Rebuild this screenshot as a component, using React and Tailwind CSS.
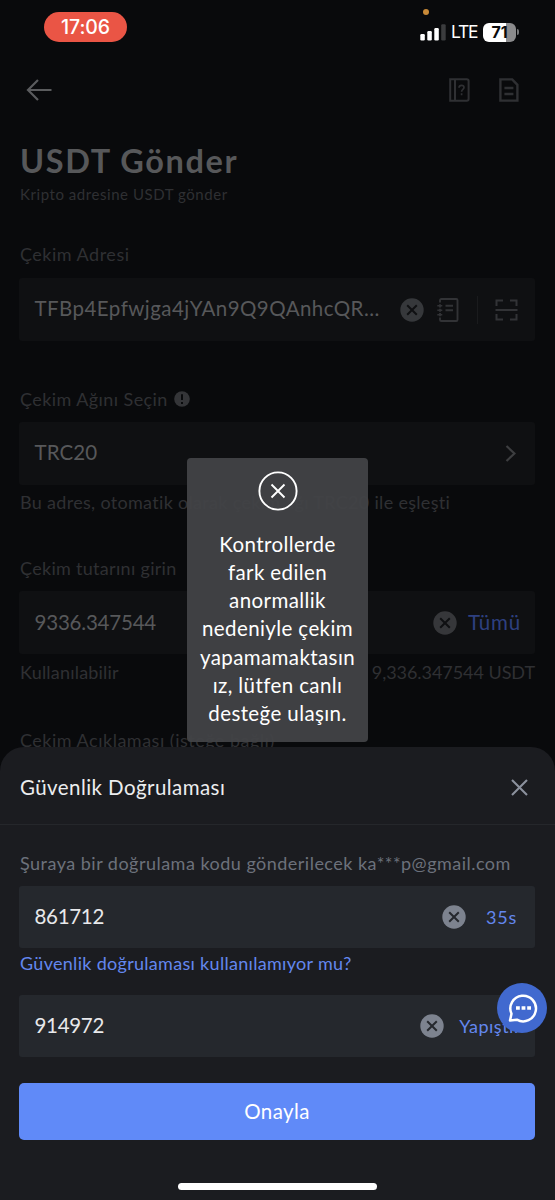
function ArrowLeft() {
  return (
    <svg width="26" height="22" viewBox="0 0 26 22" fill="none" stroke="#5b5c5e" strokeWidth="2.2">
      <path d="M12 1 2 11l10 10M2 11h23.5" />
    </svg>
  );
}

function GuideIcon() {
  return (
    <svg width="21" height="24" viewBox="0 0 21 24" fill="none" stroke="#2f3033" strokeWidth="2">
      <path d="M1.2 1.2h16.6a1.8 1.8 0 0 1 1.8 1.8v18a1.8 1.8 0 0 1-1.8 1.8H1.2zM6 1v22" />
      <path d="M10 9.7c.1-1.6 1.2-2.4 2.5-2.4s2.5.8 2.5 2.2c0 1.9-2.4 2-2.4 4.2M12.6 15.2v2" strokeWidth="1.7" />
    </svg>
  );
}

function DocIcon() {
  return (
    <svg width="20" height="24" viewBox="0 0 20 24" fill="none" stroke="#2f3033" strokeWidth="2.4">
      <path d="M1.4 1.4h11.8l5.2 5.4v15.8h-17zM5.4 10h9M5.4 16h9" />
    </svg>
  );
}

function ClearIcon({ circle, cross }) {
  return (
    <svg width="24" height="24" viewBox="0 0 24 24" className="shrink-0">
      <circle cx="12" cy="12" r="11.7" fill={circle} />
      <path d="m7.2 7.2 9.6 9.6m0-9.6-9.6 9.6" stroke={cross} strokeWidth="2" />
    </svg>
  );
}

function AddressBookIcon() {
  return (
    <svg width="22" height="24" viewBox="0 0 22 24" fill="none" stroke="#323336" strokeWidth="1.9" className="shrink-0">
      <path d="M3 4.500V2.300A1.300 1.300 0 0 1 4.300 1h14.900a1.300 1.300 0 0 1 1.300 1.300v19.400a1.300 1.300 0 0 1-1.300 1.300H4.300A1.300 1.300 0 0 1 3 21.700v-2.200" />
      <path d="M3 6.300v3.200M3 10.800v3M3 15.100v3.200" />
      <path d="M.3 7.800h5M.3 12.300h5M.3 16.800h5" strokeWidth="1.400" />
      <path d="M8.500 7.800h7.500M8.500 12.300h7.500" />
    </svg>
  );
}

function ScanIcon() {
  return (
    <svg width="23" height="22" viewBox="0 0 23 22" fill="none" stroke="#323336" strokeWidth="2" className="shrink-0">
      <path d="M1.500 7V1.500H8M15 1.500h6.500V7M21.500 15v5.500H15M8 20.500H1.500V15M.5 11h22" />
    </svg>
  );
}

function Box({ children, className = "" }) {
  return (
    <div className={`flex h-[63px] items-center rounded-[3px] bg-[#0f1012] pl-[15.500px] text-[20.5px] text-[#57585a] ${className}`}>
      {children}
    </div>
  );
}

function StatusBar() {
  return (
    <div className="relative flex h-[54px] items-start justify-between pl-[44px] pr-[36px] pt-3 font-['Inter',sans-serif]">
      <div className="flex h-[30px] w-[83px] items-center justify-center rounded-full bg-[#ea5545] pt-px text-[19.5px] leading-none font-medium tracking-[-0.1px] text-white">
        17:06
      </div>
      <span className="absolute left-[423px] top-[9px] size-[6px] rounded-full bg-[#c98a38]" />
      <div className="flex h-[19px] items-center pt-[20px]">
        <svg width="26" height="17" viewBox="0 0 26 17" fill="#fff">
          <rect x="0.300" y="10" width="4.500" height="6.500" rx="1.200" />
          <rect x="7.300" y="7" width="4.500" height="9.500" rx="1.200" />
          <rect x="14.300" y="4" width="4.500" height="12.500" rx="1.200" />
          <rect x="21.200" y="0.300" width="4.500" height="16.200" rx="1.200" fill="#3b3c3e" />
        </svg>
        <span className="ml-[5.500px] w-[27px] text-[17.500px] leading-none tracking-[-1.300px] text-white">LTE</span>
        <div className="ml-[5px] flex h-[19px] w-[33px] items-center justify-center rounded-[6px] bg-[linear-gradient(90deg,#fff_70%,#8b8b8d_70%)] text-[16px] leading-none font-bold text-[#090a0c]">
          71
        </div>
        <span className="ml-[1px] h-[6px] w-[2px] rounded-r-full bg-[#77787a]" />
      </div>
    </div>
  );
}

function SendForm() {
  return (
    <main className="flex flex-col pl-[19px] pr-[20px] text-[18px] text-[#2f3033]">
      <nav className="flex h-[72px] items-center justify-between pb-px pl-[7px] pr-[16px]">
        <ArrowLeft />
        <div className="flex items-center gap-[29px]">
          <GuideIcon />
          <DocIcon />
        </div>
      </nav>
      <h1 className="mt-[15px] flex h-10 items-center pl-px text-[32.500px] font-bold tracking-[1.600px] text-[#57585a]">USDT Gönder</h1>
      <p className="mt-[3px] flex h-5 items-center pl-px text-[15px] tracking-[0.550px]">Kripto adresine USDT gönder</p>

      <div className="mt-[40px] flex h-5 items-center pl-px tracking-[0.500px]">Çekim Adresi</div>
      <Box className="mt-[14px] pr-[17px]">
        <span className="-mt-[2px] w-[366px] tracking-[0.450px]">TFBp4Epfwjga4jYAn9Q9QAnhcQR...</span>
        <ClearIcon circle="#36383b" cross="#0f1012" />
        <span className="ml-[13px] flex"><AddressBookIcon /></span>
        <span className="ml-[18px] mr-[17px] h-7 w-px bg-[#1a1b1d]" />
        <ScanIcon />
      </Box>

      <div className="mt-[48px] flex h-5 items-center gap-[6px] pl-px tracking-[0.420px]">
        Çekim Ağını Seçin
        <svg width="16" height="16" viewBox="0 0 16 16">
          <circle cx="8" cy="8" r="7.800" fill="#343538" />
          <path d="M8 3.300v5.800M8 10.900v2" stroke="#090a0c" strokeWidth="2" />
        </svg>
      </div>
      <Box className="mt-[13px] justify-between pr-[19px]">
        <span className="-mt-[2px] tracking-[0.100px]">TRC20</span>
        <svg width="11" height="17" viewBox="0 0 11 17" fill="none" stroke="#3d3e40" strokeWidth="2.200">
          <path d="m1.500 1 8 7.500-8 7.500" />
        </svg>
      </Box>
      <p className="mt-[7px] flex h-5 items-center pl-px tracking-[0.310px] whitespace-nowrap">Bu adres, otomatik olarak çekim ağı TRC20 ile eşleşti</p>

      <div className="mt-[46px] flex h-5 items-center pl-px tracking-[0.300px]">Çekim tutarını girin</div>
      <Box className="mt-[13px] pr-[14px]">
        <span className="-mt-[1px] flex-1 tracking-[-0.200px]">9336.347544</span>
        <ClearIcon circle="#36373a" cross="#0f1012" />
        <span className="ml-[10.500px] tracking-[0.850px] text-[#2e4080]">Tümü</span>
      </Box>
      <div className="mt-[8px] flex h-5 items-center justify-between">
        <span className="pl-px tracking-[0.200px]">Kullanılabilir</span>
        <span className="tracking-[-0.050px]">9,336.347544 USDT</span>
      </div>
      <div className="mt-[48px] flex h-5 items-center pl-px tracking-[0.500px]">Çekim Açıklaması (isteğe bağlı)</div>
    </main>
  );
}

function CodeBox({ value, action, className = "", actionClass }) {
  return (
    <div className={`flex h-[62px] items-center rounded-[3px] bg-[#25282d] pl-[15.500px] text-[#e8e9eb] ${className}`}>
      <span className="-mt-[1px] flex-1 text-[20.500px] tracking-[-0.300px]">{value}</span>
      <ClearIcon circle="#7d838f" cross="#25282d" />
      <span className={`text-[#6387ee] ${actionClass}`}>{action}</span>
    </div>
  );
}

function VerificationSheet() {
  return (
    <section className="absolute inset-x-0 top-[747px] bottom-0 flex flex-col rounded-t-[24px] bg-[#1b1c20] text-[18px]">
      <header className="flex h-[78px] items-center justify-between border-b border-[#25272b] pl-[20px] pr-[27px] pt-[3px]">
        <h2 className="text-[20.500px] tracking-[0.430px] text-[#ecedef]">Güvenlik Doğrulaması</h2>
        <svg width="17" height="17" viewBox="0 0 17 17" fill="none" stroke="#8b919d" strokeWidth="2.100">
          <path d="m1 1 15 15m0-15L1 16" />
        </svg>
      </header>
      <div className="flex flex-col pl-[19px] pr-[20px] pt-[28px]">
        <p className="flex h-5 items-center pl-px tracking-[0.480px] whitespace-nowrap text-[#6c717b]">
          Şuraya bir doğrulama kodu gönderilecek ka***p@gmail.com
        </p>
        <CodeBox value="861712" action="35s" className="mt-[13px] pr-[18px]" actionClass="ml-[19.500px] tracking-[0.800px]" />
        <a className="mt-[5px] flex h-5 items-center pl-px tracking-[0.300px] text-[#6387ee]">Güvenlik doğrulaması kullanılamıyor mu?</a>
        <CodeBox value="914972" action="Yapıştır" className="mt-[22px] pr-[14px]" actionClass="ml-[15px] tracking-[0.500px]" />
        <button className="mt-[26px] h-[57px] rounded-[5px] bg-[#608af8] text-[20.500px] tracking-[0.400px] text-white">Onayla</button>
      </div>
      <div className="mr-px mt-[43px] h-[7px] w-[199px] self-center rounded-full bg-white" />
      <button className="absolute right-[8px] top-[236px] flex size-[50px] items-center justify-center rounded-full bg-[#4169cf]">
        <svg width="30" height="30" viewBox="0 0 30 30" fill="none" stroke="#fff" strokeWidth="2.500" className="ml-[2px]">
          <path d="M2 27.500 3.500 20.800A12.800 12.800 0 1 1 8.900 26.700Z" strokeLinejoin="round" />
          <path d="M8 15h3.800M13.600 15h3.800M19.200 15H23" strokeWidth="3.600" />
        </svg>
      </button>
    </section>
  );
}

function Toast() {
  return (
    <div className="absolute left-[187px] top-[458px] flex h-[283.500px] w-[181px] flex-col items-center rounded-[4px] bg-[#424347]/95 pt-[13px] text-[20.500px] leading-[28.300px] tracking-[0.400px] whitespace-nowrap text-white">
      <svg width="40" height="40" viewBox="0 0 40 40" fill="none" stroke="#fff" strokeWidth="1.900">
        <circle cx="20" cy="20" r="18.600" />
        <path d="m13.500 13.500 13 13m0-13-13 13" />
      </svg>
      <p className="mt-[18.500px] text-center">
        Kontrollerde
        <br />
        fark edilen
        <br />
        anormallik
        <br />
        nedeniyle çekim
        <br />
        yapamamaktasın
        <br />
        ız, lütfen canlı
        <br />
        desteğe ulaşın.
      </p>
    </div>
  );
}

export default function App() {
  return (
    <div className="relative h-[1200px] w-[555px] overflow-hidden bg-[#090a0c] font-['Lato','Liberation_Sans',sans-serif]">
      <StatusBar />
      <SendForm />
      <VerificationSheet />
      <Toast />
    </div>
  );
}
